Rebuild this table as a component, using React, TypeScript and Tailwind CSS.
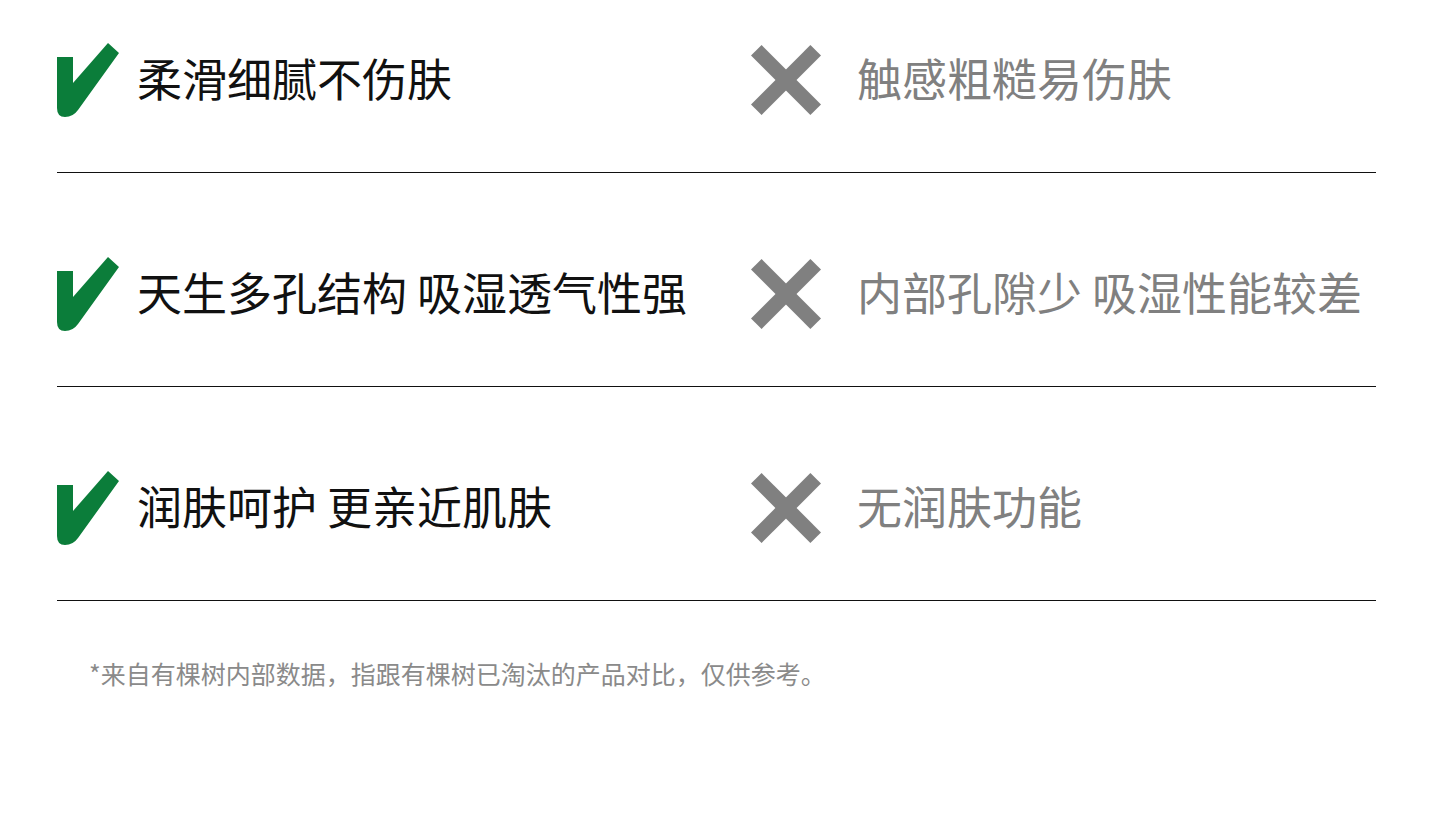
const rows = [
  { good: "柔滑细腻不伤肤", bad: "触感粗糙易伤肤" },
  { good: "天生多孔结构 吸湿透气性强", bad: "内部孔隙少 吸湿性能较差" },
  { good: "润肤呵护 更亲近肌肤", bad: "无润肤功能" },
];

const cjk = { fontFamily: '"Noto Sans CJK SC", "Noto Sans", sans-serif' };

function Check() {
  return (
    <svg width="62" height="74" viewBox="0 0 62 74" className="shrink-0">
      <path
        d="M0 14 H16 V40 L51 0 L62 10 L21 67 Q16 74 8 74 Q0 74 0 65 Z"
        fill="#0b7d3a"
      />
    </svg>
  );
}

function Cross() {
  return (
    <svg width="70" height="70" viewBox="0 0 70 70" className="shrink-0">
      <g stroke="#808080" strokeWidth="15">
        <line x1="5.3" y1="5.3" x2="64.7" y2="64.7" />
        <line x1="64.7" y1="5.3" x2="5.3" y2="64.7" />
      </g>
    </svg>
  );
}

export default function App() {
  return (
    <div className="w-[1440px] h-[828px] bg-white overflow-hidden" style={cjk}>
      <div className="pl-[57px] pr-[64px] pt-[43px]">
        {rows.map((r, i) => (
          <div key={i} className={i === 0 ? "" : "pt-[84px]"}>
            <div className="flex items-center h-[74px]">
              <div className="flex items-center w-[694px]">
                <Check />
                <span className="ml-[18px] mb-[6px] text-[45px] leading-none text-[#111] whitespace-nowrap">
                  {r.good}
                </span>
              </div>
              <div className="flex items-center">
                <Cross />
                <span className="ml-[36px] mb-[6px] text-[45px] leading-none text-[#808080] whitespace-nowrap">
                  {r.bad}
                </span>
              </div>
            </div>
            <div className="mt-[55px] h-px bg-[#111]" />
          </div>
        ))}
        <p className="mt-[54px] pl-[32px] text-[25px] leading-[36px] text-[#8a8a8a]">
          *来自有棵树内部数据，指跟有棵树已淘汰的产品对比，仅供参考。
        </p>
      </div>
    </div>
  );
}
